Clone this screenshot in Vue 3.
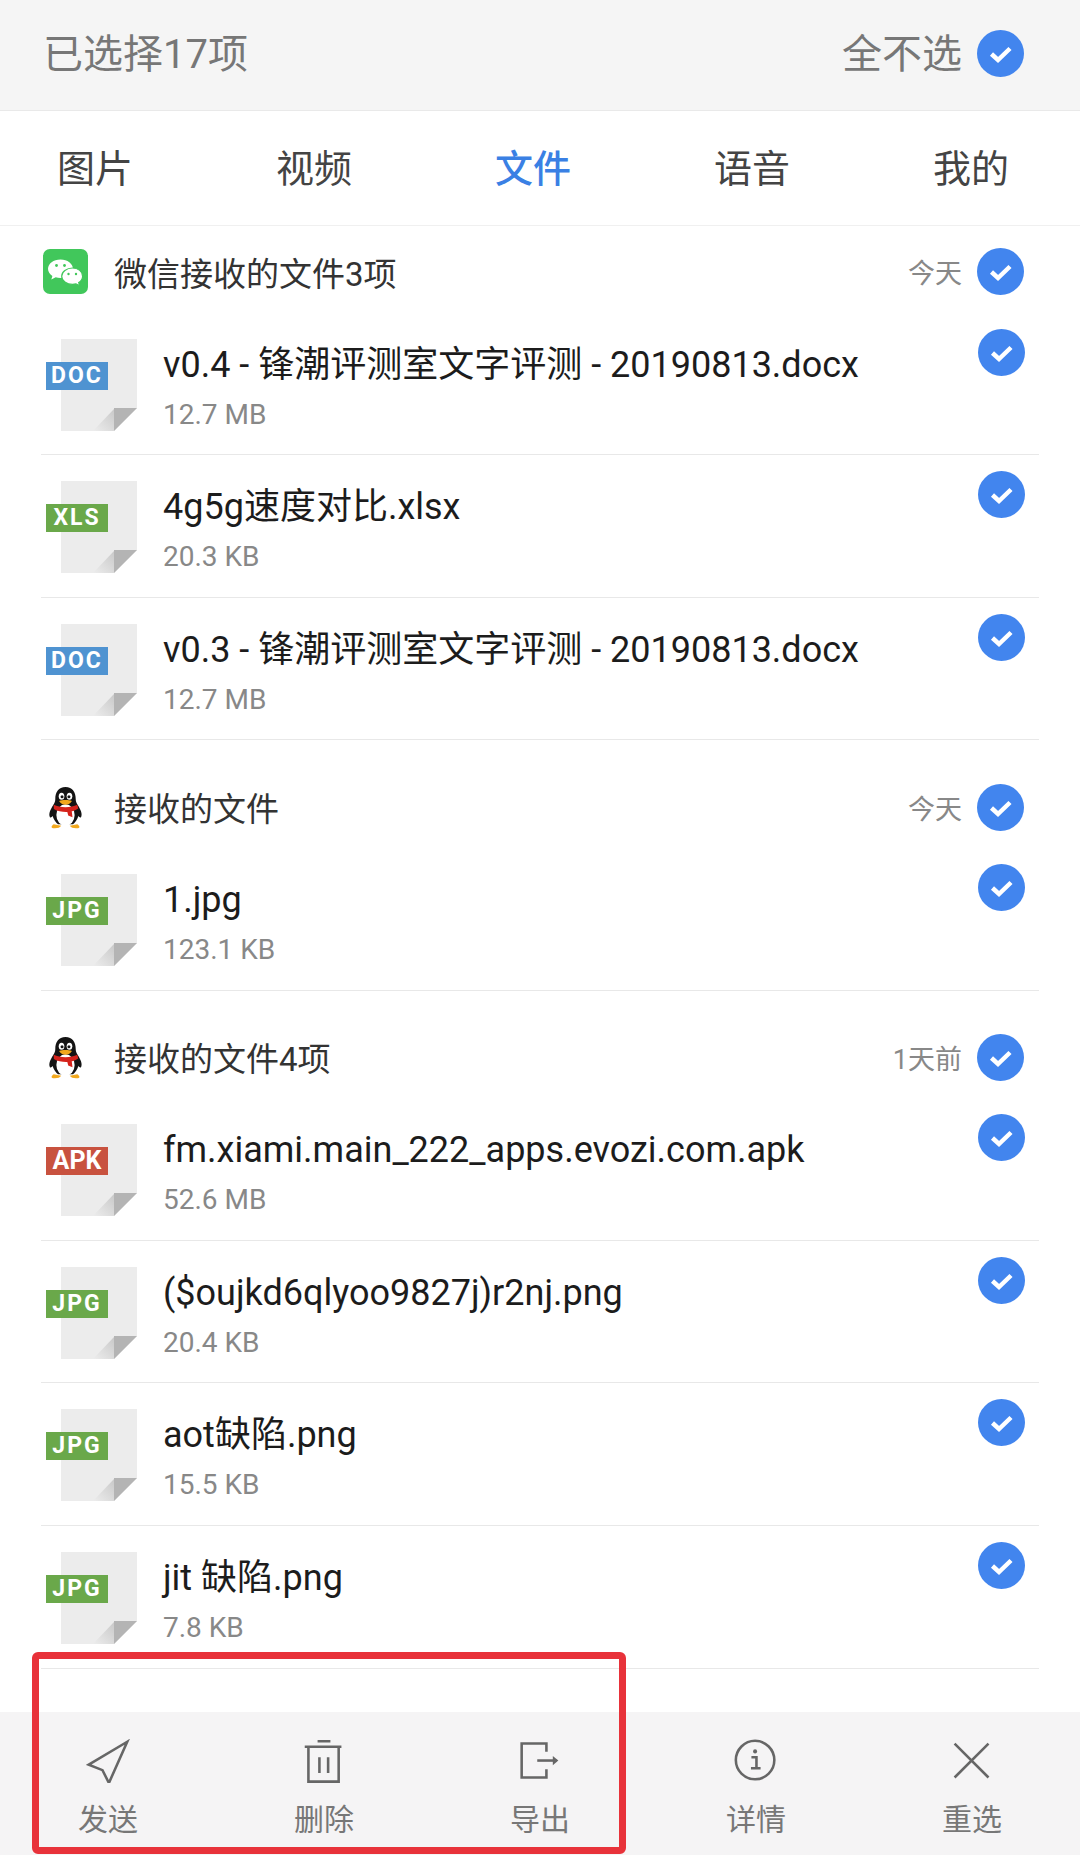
<template>
  <div class="page">
    <header class="top">
      <span>已选择17项</span>
      <div class="top-action">
        <span>全不选</span>
        <svg class="check top-check" viewBox="0 0 47 47">
          <circle cx="23.500" cy="23.500" r="23.500" fill="#4285ee" />
          <path d="M14.500 24l6.500 6 12-11.500" fill="none" stroke="#fff" stroke-width="4.500" />
        </svg>
      </div>
    </header>

    <nav class="tabs">
      <span v-for="tab in tabs" :key="tab" class="tab" :class="{ active: tab === '文件' }">{{ tab }}</span>
    </nav>

    <main class="list">
      <section v-for="group in groups" :key="group.title + group.date" class="group">
        <div class="group-head">
          <div class="app-icon">
            <svg v-if="group.app === 'wechat'" viewBox="0 0 45 45" width="45" height="45">
              <rect width="45" height="45" rx="7" fill="#41c75b" />
              <path d="M17.500 10.500C10.500 10.500 5 14.600 5 19.800c0 2.900 1.700 5.400 4.400 7.100L8.300 30.500l4.400-2.200c1.500.4 3 .6 4.800.6 6.900 0 12.500-4.100 12.500-9.100s-5.600-9.300-12.500-9.300z" fill="#fff" />
              <path d="M29.500 19c-5.900 0-10.800 3.700-10.800 8.200s4.900 8.200 10.800 8.200c1.200 0 2.400-.2 3.500-.5l3.700 2-1-3.300c2.400-1.500 3.900-3.800 3.900-6.400 0-4.500-4.200-8.200-10.100-8.200z" fill="#fff" stroke="#41c75b" stroke-width="1.200" />
              <circle cx="13.500" cy="16.500" r="1.400" fill="#41c75b" />
              <circle cx="21.500" cy="16.500" r="1.400" fill="#41c75b" />
              <circle cx="25.500" cy="25" r="1.200" fill="#41c75b" />
              <circle cx="33" cy="25" r="1.200" fill="#41c75b" />
            </svg>
            <svg v-else viewBox="0 0 34 40" width="37" height="43">
              <path d="M17 1C10.500 1 7.500 6 7.500 12c0 2-.5 3.500-2 6C3 22 1 26 2.500 29c.8.800 1.700 0 2.500-1 1 3.500 3 6 5 7.500h14c2-1.500 4-4 5-7.500.8 1 1.700 1.800 2.500 1 1.500-3-.5-7-3-11-1.500-2.500-2-4-2-6C26.500 6 23.500 1 17 1z" fill="#141414" />
              <ellipse cx="17" cy="27" rx="8.500" ry="10" fill="#fff" />
              <ellipse cx="13.300" cy="9.500" rx="2.600" ry="3.300" fill="#fff" />
              <ellipse cx="20.700" cy="9.500" rx="2.600" ry="3.300" fill="#fff" />
              <circle cx="13.800" cy="10" r="1.400" fill="#141414" />
              <circle cx="20.200" cy="10" r="1.400" fill="#141414" />
              <path d="M11 14c3-1.200 9-1.200 12 0-1.500 2.500-4 3.500-6 3.500s-4.500-1-6-3.500z" fill="#f2a81d" />
              <path d="M6 17.500c6 3 16 3 22 0l.8 3.500c-2 1.400-4 2.200-6 2.600l.7 5.400-4-1.500-.8-3.400c-4 .2-9-.6-12.500-2.800z" fill="#d5231c" />
              <path d="M6 35.500c-2 1.500-3 3.200-.5 3.700 3 .4 6.500-.2 7.500-2.200z" fill="#f2a81d" />
              <path d="M28 35.500c2 1.500 3 3.200.5 3.700-3 .4-6.500-.2-7.500-2.200z" fill="#f2a81d" />
            </svg>
          </div>
          <span class="group-title">{{ group.title }}</span>
          <span class="group-date">{{ group.date }}</span>
          <svg class="check" viewBox="0 0 47 47">
            <circle cx="23.500" cy="23.500" r="23.500" fill="#4285ee" />
            <path d="M14.500 24l6.500 6 12-11.500" fill="none" stroke="#fff" stroke-width="4.500" />
          </svg>
        </div>

        <div v-for="file in group.files" :key="file.name" class="row">
          <div class="file-icon">
            <svg viewBox="0 0 76 92" width="76" height="92">
              <defs>
                <linearGradient :id="'fold-' + file.name.length" x1="0" y1="1" x2="1" y2="0">
                  <stop offset="0" stop-color="#ededed" />
                  <stop offset="1" stop-color="#c9c9c9" />
                </linearGradient>
              </defs>
              <path d="M0 0H76V69L53 92H0z" fill="#ececec" />
              <path d="M32 92L53 70V92z" :fill="'url(#fold-' + file.name.length + ')'" />
              <path d="M53 69H76L53 92z" fill="#b4b4b4" />
            </svg>
            <span class="file-badge" :class="file.type">{{ file.type.toUpperCase() }}</span>
          </div>
          <div class="file-info">
            <div class="file-name">{{ file.name }}</div>
            <div class="file-size">{{ file.size }}</div>
          </div>
          <svg class="check row-check" viewBox="0 0 47 47">
            <circle cx="23.500" cy="23.500" r="23.500" fill="#4285ee" />
            <path d="M14.500 24l6.500 6 12-11.500" fill="none" stroke="#fff" stroke-width="4.500" />
          </svg>
        </div>
      </section>
    </main>

    <footer class="bar">
      <div class="bar-item">
        <svg viewBox="0 0 48 48" class="bar-icon">
          <path d="M45 3L3 28l15 6 7 14z" fill="none" stroke="#666" stroke-width="2.800" />
        </svg>
        <span>发送</span>
      </div>
      <div class="bar-item">
        <svg viewBox="0 0 48 48" class="bar-icon">
          <path d="M17 2.500H31M3 8.500H43M7 8.500V46.500H40V8.500M19 20V37M28.500 20V37" fill="none" stroke="#666" stroke-width="2.800" />
        </svg>
        <span>删除</span>
      </div>
      <div class="bar-item">
        <svg viewBox="0 0 48 48" class="bar-icon">
          <path d="M31 14V5H4V42H31V33" fill="none" stroke="#666" stroke-width="2.800" />
          <path d="M21 23.500H42" fill="none" stroke="#666" stroke-width="2.800" />
          <path d="M38 18.500L44 23.500L38 28.500z" fill="#666" />
        </svg>
        <span>导出</span>
      </div>
      <div class="bar-item">
        <svg viewBox="0 0 48 48" class="bar-icon">
          <circle cx="23" cy="23" r="21" fill="none" stroke="#666" stroke-width="2.800" />
          <circle cx="23" cy="13.500" r="2.200" fill="#666" />
          <path d="M19 20H24.500V31M18.500 32H29" fill="none" stroke="#666" stroke-width="2.800" />
        </svg>
        <span>详情</span>
      </div>
      <div class="bar-item">
        <svg viewBox="0 0 48 48" class="bar-icon">
          <path d="M5 5L42 42M42 5L5 42" fill="none" stroke="#666" stroke-width="2.800" />
        </svg>
        <span>重选</span>
      </div>
    </footer>

    <div class="highlight"></div>
  </div>
</template>

<script setup>
const tabs = ["图片", "视频", "文件", "语音", "我的"];

const groups = [
  {
    app: "wechat",
    title: "微信接收的文件3项",
    date: "今天",
    files: [
      { type: "doc", name: "v0.4 - 锋潮评测室文字评测 - 20190813.docx", size: "12.7 MB" },
      { type: "xls", name: "4g5g速度对比.xlsx", size: "20.3 KB" },
      { type: "doc", name: "v0.3 - 锋潮评测室文字评测 - 20190813.docx", size: "12.7 MB" },
    ],
  },
  {
    app: "qq",
    title: "接收的文件",
    date: "今天",
    files: [{ type: "jpg", name: "1.jpg", size: "123.1 KB" }],
  },
  {
    app: "qq",
    title: "接收的文件4项",
    date: "1天前",
    files: [
      { type: "apk", name: "fm.xiami.main_222_apps.evozi.com.apk", size: "52.6 MB" },
      { type: "jpg", name: "($oujkd6qlyoo9827j)r2nj.png", size: "20.4 KB" },
      { type: "jpg", name: "aot缺陷.png", size: "15.5 KB" },
      { type: "jpg", name: "jit 缺陷.png", size: "7.8 KB" },
    ],
  },
  {
    app: "wechat",
    title: "",
    date: "",
    files: [],
  },
];
</script>

<style>
html,
body {
  margin: 0;
  background: #fff;
}
</style>

<style scoped>
.page {
  position: relative;
  display: flex;
  flex-direction: column;
  width: 1080px;
  height: 1855px;
  overflow: hidden;
  background: #fff;
  font-family: Roboto, "Noto Sans CJK SC", sans-serif;
}

.top {
  flex: none;
  display: flex;
  align-items: center;
  justify-content: space-between;
  height: 111px;
  padding: 0 56px 2px 43px;
  box-sizing: border-box;
  background: #f5f5f5;
  border-bottom: 1px solid #e9e9e9;
  color: #777;
  font-size: 40px;
  line-height: 47px;
}

.top-action {
  display: flex;
  align-items: center;
  gap: 15px;
}

.top-check {
  margin-top: -2px;
}

.tabs {
  flex: none;
  display: flex;
  align-items: center;
  justify-content: space-between;
  height: 115px;
  padding: 0 71px 6px 57px;
  box-sizing: border-box;
  border-bottom: 1px solid #f0f0f0;
  color: #444;
  font-size: 38px;
}

.tab.active {
  color: #3a80e4;
  font-weight: 500;
}

.list {
  flex: 1;
  min-height: 0;
  overflow: hidden;
}

.group + .group {
  margin-top: 21px;
}

.group-head {
  display: flex;
  align-items: center;
  height: 86.5px;
  padding: 5px 56px 0 43px;
  box-sizing: border-box;
}

.app-icon {
  display: flex;
  justify-content: center;
  width: 45px;
  margin-right: 26px;
}

.group-title {
  flex: 1;
  color: #333;
  font-size: 33px;
}

.group-date {
  margin-right: 15px;
  color: #888;
  font-size: 27px;
}

.check {
  flex: none;
  display: block;
  width: 47px;
  height: 47px;
}

.row {
  display: flex;
  align-items: flex-start;
  height: 142.67px;
  margin: 0 41px;
  padding: 26px 14px 0 20px;
  box-sizing: border-box;
  border-bottom: 1px solid #e8e8e8;
}

.file-icon {
  position: relative;
  flex: none;
  width: 76px;
  height: 92px;
  margin-right: 26px;
}

.file-icon svg {
  display: block;
}

.file-badge {
  position: absolute;
  left: -15px;
  top: 23px;
  width: 62px;
  height: 28px;
  color: #fff;
  font-family: "Liberation Sans Narrow", Roboto, sans-serif;
  font-size: 23px;
  font-weight: 700;
  letter-spacing: 2px;
  line-height: 28px;
  text-align: center;
}

.file-badge.doc {
  background: #4f93d1;
}

.file-badge.xls,
.file-badge.jpg {
  background: #6aa84a;
}

.file-badge.apk {
  background: #c8523f;
  font-size: 25px;
  letter-spacing: 0;
}

.file-info {
  flex: 1;
  min-width: 0;
}

.file-name {
  margin-top: 1px;
  color: #1c1c1c;
  font-size: 36px;
  line-height: 50px;
  white-space: nowrap;
}

.file-size {
  color: #888;
  font-size: 28px;
  line-height: 50px;
}

.row-check {
  margin-top: -10px;
}

.bar {
  position: absolute;
  left: 0;
  right: 0;
  bottom: 0;
  display: flex;
  height: 143px;
  background: #f5f4f5;
}

.bar-item {
  flex: 1;
  display: flex;
  flex-direction: column;
  align-items: center;
  padding-top: 27px;
  color: #777;
  font-size: 30px;
}

.bar-icon {
  width: 44px;
  height: 44px;
  margin-bottom: 12px;
}

.highlight {
  position: absolute;
  left: 32px;
  top: 1652px;
  width: 594px;
  height: 202px;
  box-sizing: border-box;
  border: 7px solid #e8323a;
  border-radius: 6px;
}
</style>
